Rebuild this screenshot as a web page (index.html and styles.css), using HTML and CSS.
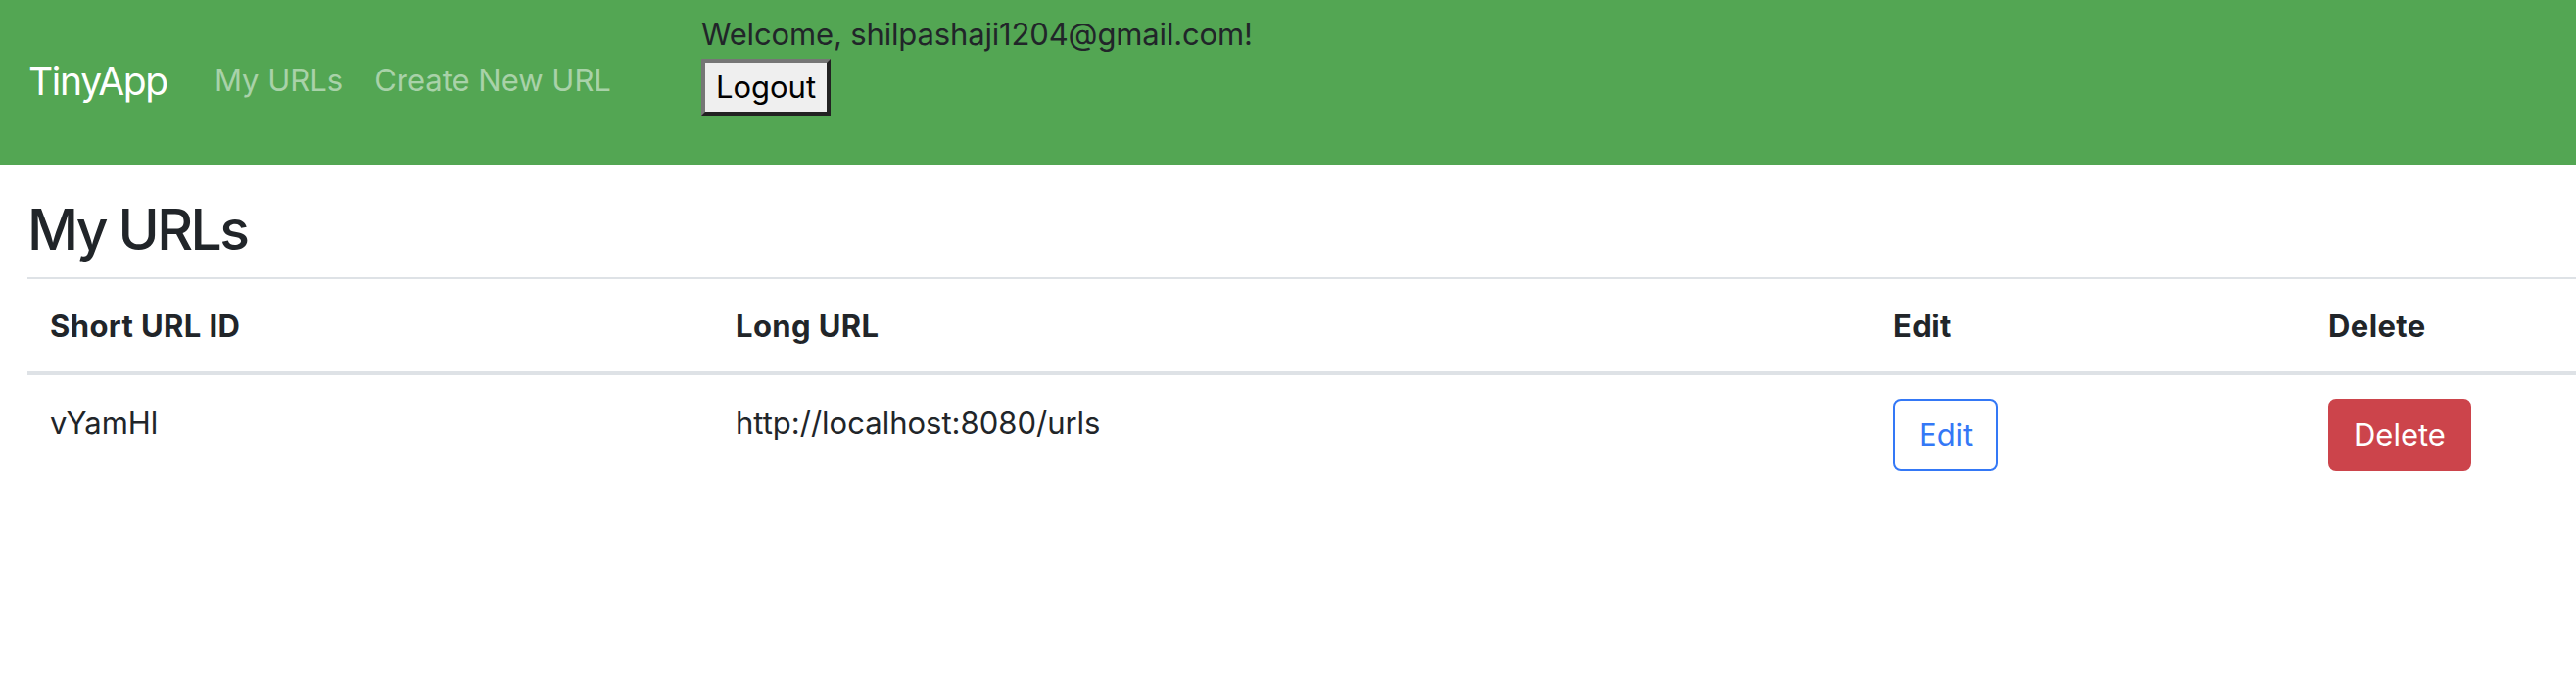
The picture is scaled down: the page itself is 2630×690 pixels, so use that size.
FILE: index.html
```html
<!DOCTYPE html>
<html lang="en">
<head>
<meta charset="utf-8">
<title>TinyApp</title>
<link rel="stylesheet" href="styles.css">
</head>
<body>
<nav class="navbar">
  <a class="brand" href="#">TinyApp</a>
  <ul class="nav-links">
    <li><a class="nav-link" href="#">My URLs</a></li>
    <li><a class="nav-link" href="#">Create New URL</a></li>
  </ul>
  <div class="user">
    <div class="welcome">Welcome, shilpashaji1204@gmail.com!</div>
    <form class="logout-form">
      <button class="logout" type="button">Logout</button>
    </form>
  </div>
</nav>
<main class="content">
  <h2 class="title">My URLs</h2>
  <table class="url-table">
    <thead>
      <tr>
        <th class="col-short">Short URL ID</th>
        <th class="col-long">Long URL</th>
        <th class="col-edit">Edit</th>
        <th class="col-delete">Delete</th>
      </tr>
    </thead>
    <tbody>
      <tr>
        <td>vYamHl</td>
        <td>http://localhost:8080/urls</td>
        <td><a class="btn btn-edit" href="#">Edit</a></td>
        <td><button class="btn btn-delete" type="button">Delete</button></td>
      </tr>
    </tbody>
  </table>
</main>
</body>
</html>
```
FILE: styles.css
```css
* { box-sizing: border-box; }

html, body {
  margin: 0;
  padding: 0;
  background: #ffffff;
}

body {
  font-family: Inter, "Liberation Sans", Arial, sans-serif;
  color: #212529;
  font-size: 31px;
  line-height: 1.5;
}

.navbar {
  display: flex;
  align-items: center;
  height: 168px;
  padding: 0 32px 0 29px;
  background: #53a653;
}

.brand {
  font-size: 39px;
  line-height: 58px;
  letter-spacing: -1.3px;
  color: #ffffff;
  text-decoration: none;
  margin-right: 32px;
  margin-top: -2px;
}

.nav-links {
  display: flex;
  list-style: none;
  margin: 0;
  padding: 0;
}

.nav-link {
  display: block;
  padding: 0 16px;
  line-height: 46px;
  margin-top: -4px;
  color: rgba(255, 255, 255, 0.5);
  text-decoration: none;
}

.user {
  align-self: flex-start;
  margin-top: 12px;
  margin-left: 76px;
}

.welcome {
  line-height: 46px;
  letter-spacing: -0.15px;
  color: #212529;
}

.logout-form {
  margin: 2px 0 0 0;
}

.logout {
  font-family: Inter, "Liberation Sans", Arial, sans-serif;
  font-size: 31px;
  line-height: 46px;
  color: #000000;
  background: #efefef;
  padding: 2px 11px;
  border-width: 4px;
  border-style: solid;
  border-color: #767676 #222222 #222222 #767676;
  border-radius: 0;
  margin: 0;
}

.content {
  padding: 0 0 0 28px;
}

.title {
  font-size: 57px;
  font-weight: 500;
  line-height: 68px;
  letter-spacing: -2.6px;
  margin: 33px 0 14px 0;
  color: #212529;
}

.url-table {
  width: 100%;
  border-collapse: collapse;
}

.url-table th,
.url-table td {
  text-align: left;
  padding: 23px;
  vertical-align: top;
}

.url-table th {
  font-weight: 700;
  letter-spacing: 0.4px;
  padding-top: 25px;
  padding-bottom: 22px;
  border-top: 2px solid #dee2e6;
  border-bottom: 4px solid #dee2e6;
  vertical-align: bottom;
}

.url-table td {
  padding-top: 26px;
}

.col-short { width: 700px; }
.col-long { width: 1182px; }
.col-edit { width: 444px; }

.btn {
  display: inline-block;
  font-family: Inter, "Liberation Sans", Arial, sans-serif;
  font-size: 31px;
  line-height: 46px;
  padding: 12px 24px;
  border: 2px solid transparent;
  border-radius: 8px;
  text-decoration: none;
  margin: -2px 0 0 0;
  cursor: pointer;
}

.btn-edit {
  color: #3478f6;
  border-color: #3478f6;
  background: #ffffff;
}

.btn-delete {
  color: #ffffff;
  background: #cc444b;
  border-color: #cc444b;
}
```
